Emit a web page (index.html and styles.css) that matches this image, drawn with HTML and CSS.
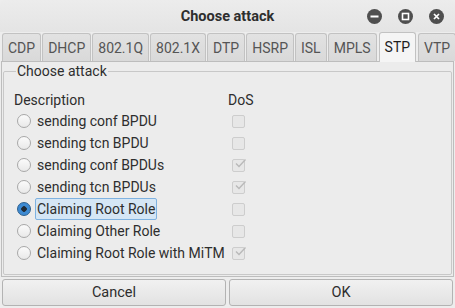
FILE: index.html
```html
<!DOCTYPE html>
<html lang="en">
<head>
    <meta charset="UTF-8">
    <title>Choose attack</title>
    <link rel="stylesheet" href="styles.css">
</head>
<body>
    <div class="window">
        <div class="titlebar">
            <span></span>
            <div class="title">Choose attack</div>
            <div class="wm-buttons">
                <span class="wm-btn"><svg width="15" height="15" viewBox="0 0 15 15"><circle cx="7.5" cy="7.5" r="7.5" fill="#4f4f4f"/><rect x="3.5" y="6.5" width="8" height="2" fill="#fff"/></svg></span>
                <span class="wm-btn"><svg width="15" height="15" viewBox="0 0 15 15"><circle cx="7.5" cy="7.5" r="7.5" fill="#4f4f4f"/><rect x="4.5" y="4.5" width="6" height="6" fill="none" stroke="#fff" stroke-width="1.6"/></svg></span>
                <span class="wm-btn"><svg width="15" height="15" viewBox="0 0 15 15"><circle cx="7.5" cy="7.5" r="7.5" fill="#4f4f4f"/><path d="M5 5 L10 10 M10 5 L5 10" stroke="#fff" stroke-width="1.7"/></svg></span>
            </div>
        </div>

        <div class="tabs">
            <div class="tab">CDP</div>
            <div class="tab">DHCP</div>
            <div class="tab">802.1Q</div>
            <div class="tab">802.1X</div>
            <div class="tab">DTP</div>
            <div class="tab">HSRP</div>
            <div class="tab">ISL</div>
            <div class="tab">MPLS</div>
            <div class="tab active">STP</div>
            <div class="tab">VTP</div>
        </div>

        <div class="panel">
            <fieldset class="group">
                <legend>Choose attack</legend>
                <div class="attack-table">
                    <div class="head">Description</div>
                    <div class="head">DoS</div>

                    <div class="desc"><span class="radio"></span><span class="label">sending conf BPDU</span></div>
                    <div class="dos"><span class="check"></span></div>

                    <div class="desc"><span class="radio"></span><span class="label">sending tcn BPDU</span></div>
                    <div class="dos"><span class="check"></span></div>

                    <div class="desc"><span class="radio"></span><span class="label">sending conf BPDUs</span></div>
                    <div class="dos"><span class="check checked"></span></div>

                    <div class="desc"><span class="radio"></span><span class="label">sending tcn BPDUs</span></div>
                    <div class="dos"><span class="check checked"></span></div>

                    <div class="desc"><span class="radio selected"></span><span class="label focused">Claiming Root Role</span></div>
                    <div class="dos"><span class="check"></span></div>

                    <div class="desc"><span class="radio"></span><span class="label">Claiming Other Role</span></div>
                    <div class="dos"><span class="check"></span></div>

                    <div class="desc"><span class="radio"></span><span class="label">Claiming Root Role with MiTM</span></div>
                    <div class="dos"><span class="check checked"></span></div>
                </div>
            </fieldset>
        </div>

        <div class="buttons">
            <button class="btn">Cancel</button>
            <button class="btn">OK</button>
        </div>
    </div>
</body>
</html>
```

FILE: styles.css
```css
* {
    margin: 0;
    padding: 0;
    box-sizing: border-box;
}

body {
    font-family: Roboto, "Noto Sans", sans-serif;
    font-size: 14px;
    color: #2e2e2e;
    background: #ededed;
}

.window {
    width: 455px;
    height: 308px;
    background: #ededed;
    display: flex;
    flex-direction: column;
}

.titlebar {
    height: 32px;
    display: grid;
    grid-template-columns: 1fr auto 1fr;
    align-items: center;
    background: linear-gradient(#ececec, #e4e4e4);
    border-radius: 5px 5px 0 0;
}

.title {
    font-weight: bold;
    font-size: 14.5px;
    color: #2e2e2e;
    padding-top: 1px;
}

.wm-buttons {
    display: flex;
    justify-content: flex-end;
    gap: 16px;
    padding-right: 11px;
}

.wm-btn svg {
    display: block;
}

.tabs {
    display: flex;
    align-items: flex-end;
    gap: 1px;
    height: 29px;
    padding-left: 2px;
    position: relative;
    z-index: 1;
}

.tab {
    height: 28px;
    padding: 0 5px;
    border: 1px solid #c2c2c2;
    border-bottom: none;
    border-radius: 3px 3px 0 0;
    background: linear-gradient(#e2e2e2, #d9d9d9);
    color: #555;
    line-height: 28px;
}

.tab.active {
    height: 30px;
    margin: 0 1px -1px;
    background: #f5f5f5;
    color: #1e1e1e;
}

.panel {
    margin: 0 1px;
    height: 216px;
    border: 1px solid #bdbdbd;
    background: #ececec;
    padding: 0 1px 1px;
}

.group {
    height: 100%;
    border: 1px solid #c8c8c8;
    border-radius: 2px;
    padding: 0 10px;
}

.group legend {
    padding: 0 1px;
    margin-left: 2px;
    line-height: 18px;
    color: #2e2e2e;
}

.attack-table {
    display: grid;
    grid-template-columns: 214px auto;
    grid-auto-rows: 22px;
    grid-template-rows: 20px;
    margin-top: 10px;
    align-items: center;
    white-space: nowrap;
}

.head {
    line-height: 20px;
}

.desc {
    display: flex;
    align-items: center;
    gap: 4px;
    padding-left: 3px;
}

.label {
    line-height: 20px;
    padding: 0 1px;
    border: 1px solid transparent;
    border-radius: 2px;
}

.label.focused {
    background: #d5e6f5;
    border-color: #7fb2e0;
}

.radio {
    width: 14px;
    height: 14px;
    border-radius: 50%;
    border: 1px solid #a8a8a8;
    background: linear-gradient(#fbfbfb, #e9e9e9);
    flex-shrink: 0;
}

.radio.selected {
    border-color: #2b5f8e;
    background: radial-gradient(circle, #1f2b36 0 2.5px, #3d8ad2 3px);
}

.dos {
    padding-left: 4px;
}

.check {
    display: block;
    width: 13px;
    height: 13px;
    border: 1px solid #cdcdcd;
    border-radius: 2px;
    background: #e7e7e7;
    position: relative;
}

.check.checked::after {
    content: "";
    position: absolute;
    left: 2px;
    top: -1px;
    width: 11px;
    height: 9px;
    background: url("data:image/svg+xml,%3Csvg xmlns='http://www.w3.org/2000/svg' width='11' height='9' viewBox='0 0 11 9'%3E%3Cpath d='M1 4.5 L4 7.5 L10.5 0.5' fill='none' stroke='%23b9b9b9' stroke-width='1.4'/%3E%3C/svg%3E") no-repeat;
}

.buttons {
    display: flex;
    gap: 3px;
    padding: 2px 2px 2px;
    flex: 1;
}

.btn {
    flex: 1;
    height: 27px;
    font-family: inherit;
    font-size: 14.5px;
    color: #2e2e2e;
    border: 1px solid #b3b3b3;
    border-radius: 3px;
    background: linear-gradient(#f1f1f1, #e2e2e2);
}
```
